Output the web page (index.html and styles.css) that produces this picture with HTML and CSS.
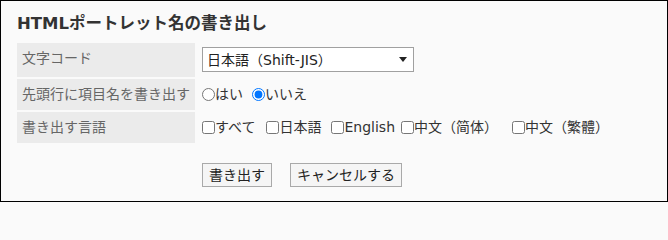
FILE: index.html
```html
<!DOCTYPE html>
<html lang="ja">
<head>
<meta charset="utf-8">
<title>HTMLポートレット名の書き出し</title>
<link rel="stylesheet" href="styles.css">
</head>
<body>
<div class="frame">
  <h1 class="title">HTMLポートレット名の書き出し</h1>
  <table class="form">
    <tr>
      <th class="label">文字コード</th>
      <td class="value">
        <span class="select-wrap">
          <select class="select"><option>日本語（Shift-JIS）</option></select>
          <span class="caret"></span>
        </span>
      </td>
    </tr>
    <tr>
      <th class="label">先頭行に項目名を書き出す</th>
      <td class="value">
        <div class="opts">
          <label class="opt opt-yes"><input class="radio" type="radio" name="header">はい</label>
          <label class="opt"><input class="radio" type="radio" name="header" checked>いいえ</label>
        </div>
      </td>
    </tr>
    <tr>
      <th class="label">書き出す言語</th>
      <td class="value">
        <div class="opts">
          <label class="opt opt-all"><input class="check" type="checkbox">すべて</label>
          <label class="opt opt-ja"><input class="check" type="checkbox">日本語</label>
          <label class="opt opt-en"><input class="check" type="checkbox">English</label>
          <label class="opt opt-hans"><input class="check" type="checkbox">中文（简体）</label>
          <label class="opt"><input class="check" type="checkbox">中文（繁體）</label>
        </div>
      </td>
    </tr>
  </table>
  <div class="actions">
    <button class="btn" type="button">書き出す</button>
    <button class="btn" type="button">キャンセルする</button>
  </div>
</div>
</body>
</html>
```

FILE: styles.css
```css
html, body {
  margin: 0;
  padding: 0;
  height: 202px;
  overflow: hidden;
}

body {
  font-family: "DejaVu Sans", "Noto Sans CJK JP", sans-serif;
  font-size: 14px;
  color: #333;
  background: #fafafa;
}

.frame {
  box-sizing: border-box;
  width: 668px;
  height: 202px;
  border: 1px solid #000;
  background: #fafafa;
  padding: 13px 14px 0 14px;
}

.title {
  margin: 0 0 0 2px;
  font-size: 16.5px;
  line-height: 20px;
  font-weight: bold;
  color: #333;
}

.form {
  border-collapse: separate;
  border-spacing: 2px;
  margin-top: 7px;
}

.label {
  width: 168px;
  padding: 4px 5px 5px;
  background: #ebebeb;
  color: #666;
  font-weight: normal;
  text-align: left;
  vertical-align: top;
  line-height: 22px;
  white-space: nowrap;
}

.value {
  padding: 4px 5px 5px;
  vertical-align: top;
  line-height: 22px;
  color: #333;
}

.select-wrap {
  position: relative;
  display: block;
  width: 212px;
  height: 25px;
}

.select {
  -webkit-appearance: none;
  appearance: none;
  box-sizing: border-box;
  width: 212px;
  height: 25px;
  margin: 0;
  padding: 0 4px;
  border: 1px solid #a0a0a0;
  border-radius: 0;
  background: #fff;
  font-family: inherit;
  font-size: 14px;
  color: #222;
  display: block;
}

.caret {
  position: absolute;
  right: 7px;
  top: 10px;
  width: 0;
  height: 0;
  border-left: 4px solid transparent;
  border-right: 4px solid transparent;
  border-top: 5px solid #222;
  pointer-events: none;
}

.opts {
  display: flex;
  align-items: center;
  height: 22px;
}

.opt {
  display: inline-flex;
  align-items: center;
  margin-right: 10px;
  white-space: nowrap;
}

.opt-yes { margin-right: 9px; }
.opt-all { margin-right: 11px; }
.opt-ja { margin-right: 10px; }
.opt-en { margin-right: 6px; }
.opt-hans { margin-right: 14px; }

.radio,
.check {
  width: 13px;
  height: 13px;
  margin: 0;
  flex: none;
}

.actions {
  display: flex;
  gap: 18px;
  margin-top: 18px;
  padding-left: 187px;
}

.btn {
  box-sizing: border-box;
  height: 24px;
  margin: 0;
  padding: 0 6px;
  border: 1px solid #a9a9a9;
  border-radius: 0;
  background: #f5f5f5;
  font-family: inherit;
  font-size: 14px;
  line-height: 22px;
  color: #222;
}
```
